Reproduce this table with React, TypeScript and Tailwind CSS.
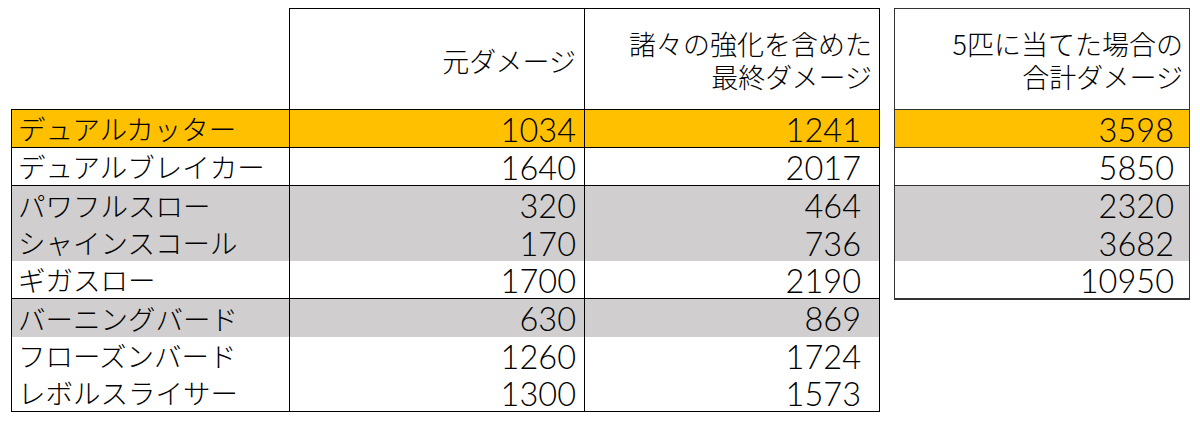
const rows = [
  { name: "デュアルカッター", base: 1034, total: 1241, five: 3598, bg: "bg-[#ffc000]", h: "h-[38px]", line: true },
  { name: "デュアルブレイカー", base: 1640, total: 2017, five: 5850, bg: "bg-white", h: "h-[38px]", line: true },
  { name: "パワフルスロー", base: 320, total: 464, five: 2320, bg: "bg-[#d0cece]", h: "h-[38px]", line: false },
  { name: "シャインスコール", base: 170, total: 736, five: 3682, bg: "bg-[#d0cece]", h: "h-[37px]", line: false },
  { name: "ギガスロー", base: 1700, total: 2190, five: 10950, bg: "bg-white", h: "h-[38px]", line: true },
  { name: "バーニングバード", base: 630, total: 869, bg: "bg-[#d0cece]", h: "h-[38px]", line: false },
  { name: "フローズンバード", base: 1260, total: 1724, bg: "bg-white", h: "h-[37px]", line: false },
  { name: "レボルスライサー", base: 1300, total: 1573, bg: "bg-white", h: "h-[37px]", line: false },
];

const jp = "font-['Noto_Sans_CJK_JP',sans-serif] font-light";
const num = "font-['Lato','Noto_Sans','Noto_Sans_CJK_JP',sans-serif] font-light text-[32.5px] leading-none";

export default function App() {
  const withFive = rows.filter((r) => r.five !== undefined);

  return (
    <div className={`flex items-start gap-[14px] pl-[11px] pt-[8px] bg-white min-h-[424px] text-black ${jp}`}>
      {/* main table */}
      <div className="w-[869px]">
        <div className="flex h-[101px] text-[27px] leading-[33px]">
          <div className="w-[278px]" />
          <div className="w-[295px] border-l border-t border-black flex items-center justify-end pr-[8px] pt-[2px]">
            元ダメージ
          </div>
          <div className="flex-1 border-l border-t border-r border-black flex flex-col items-end justify-center pr-[7px] pt-[1px]">
            <span>諸々の強化を含めた</span>
            <span>最終ダメージ</span>
          </div>
        </div>
        <div className="border border-black">
          {rows.map((r) => (
            <div key={r.name} className={`flex ${r.h} ${r.bg} ${r.line ? "border-b border-black" : ""}`}>
              <div className="w-[277px] flex items-center pl-[6px] text-[27.5px] leading-none pt-[1px]">{r.name}</div>
              <div className={`w-[295px] border-l border-black flex items-center justify-end pr-[8px] pt-[3px] ${num}`}>
                {r.base}
              </div>
              <div className={`flex-1 border-l border-black flex items-center justify-end pr-[18px] pt-[3px] ${num}`}>
                {r.total}
              </div>
            </div>
          ))}
        </div>
      </div>

      {/* 5-hit total */}
      <div className="w-[296px]">
        <div className="h-[101px] border-l border-t border-r border-[#333] flex flex-col items-end justify-center pr-[6px] pt-[1px] text-[27px] leading-[33px]">
          <span>5匹に当てた場合の</span>
          <span>合計ダメージ</span>
        </div>
        <div className="border border-[#333]">
          {withFive.map((r) => (
            <div
              key={r.name}
              className={`flex items-center justify-end pr-[15px] pt-[3px] ${r.h} ${r.bg} ${r.line ? "border-b border-[#333]" : ""} ${num}`}
            >
              {r.five}
            </div>
          ))}
        </div>
      </div>
    </div>
  );
}
